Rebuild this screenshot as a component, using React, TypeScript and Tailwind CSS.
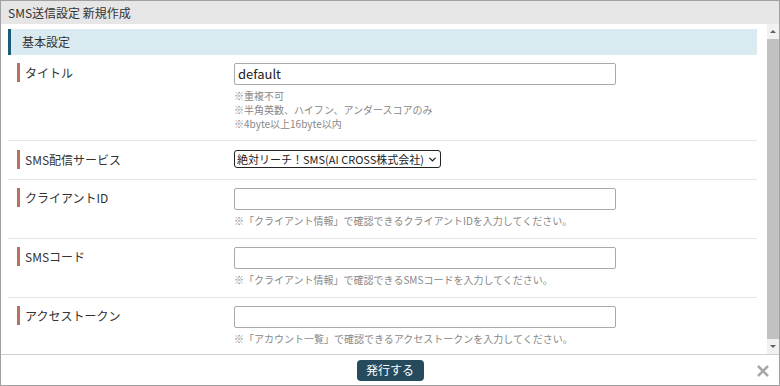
import { ChevronDown } from "lucide-react";

const FONT = { fontFamily: '"Noto Sans CJK JP", "Noto Sans", sans-serif' };

function Label({ text }: { text: string }) {
  return (
    <div className="w-[226px] shrink-0 pl-[9px] flex items-start">
      <span className="w-[3px] h-[19px] bg-[#b5725f] shrink-0" />
      <span className="ml-[5px] text-[12px] leading-[19px] text-[#333]">{text}</span>
    </div>
  );
}

function TextInput({ value = "" }: { value?: string }) {
  return (
    <div className="w-[382px] h-[22px] border border-[#a9a9a9] rounded-[2px] px-[3px] flex items-center text-[13px] text-[#222]">
      {value}
    </div>
  );
}

function Hint({ lines }: { lines: string[] }) {
  return (
    <div className="mt-[4px] text-[10px] leading-[14px] text-[#888]">
      {lines.map((l) => (
        <p key={l}>{l}</p>
      ))}
    </div>
  );
}

const rows = [
  { label: "クライアントID", hint: "※「クライアント情報」で確認できるクライアントIDを入力してください。" },
  { label: "SMSコード", hint: "※「クライアント情報」で確認できるSMSコードを入力してください。" },
  { label: "アクセストークン", hint: "※「アカウント一覧」で確認できるアクセストークンを入力してください。" },
];

export default function App() {
  return (
    <div style={FONT} className="w-[780px] h-[386px] border border-[#a0a0a0] bg-white flex flex-col overflow-hidden">
      {/* Title bar */}
      <div className="h-[23px] shrink-0 bg-[#e6e6e6] pl-[7px] flex items-center text-[12px] text-[#333]">
        SMS送信設定 新規作成
      </div>

      {/* Body */}
      <div className="flex-1 flex min-h-0">
        <div className="flex-1 pl-[7px] pr-[10px] overflow-hidden">
          <div className="mt-[5px] h-[26px] bg-[#daeaf1] border-l-[3px] border-[#1b5d78] pl-[11px] flex items-center text-[12px] text-[#333]">
            基本設定
          </div>

          {/* タイトル */}
          <div className="flex pt-[8px] pb-[9px] border-b border-[#e6e6e6]">
            <Label text="タイトル" />
            <div>
              <TextInput value="default" />
              <Hint lines={["※重複不可", "※半角英数、ハイフン、アンダースコアのみ", "※4byte以上16byte以内"]} />
            </div>
          </div>

          {/* SMS配信サービス */}
          <div className="flex pt-[9px] pb-[10px] border-b border-[#e6e6e6]">
            <Label text="SMS配信サービス" />
            <div className="h-[18px] border border-[#222] rounded-[3px] pl-[2px] pr-[2px] flex items-center gap-[3px] text-[11px] text-[#222] leading-none">
              絶対リーチ！SMS(AI CROSS株式会社)
              <ChevronDown className="w-[11px] h-[11px]" strokeWidth={3} />
            </div>
          </div>

          {rows.map((r, i) => (
            <div key={r.label} className={`flex pt-[8px] pb-[10px] ${i < rows.length - 1 ? "border-b border-[#e6e6e6]" : ""}`}>
              <Label text={r.label} />
              <div>
                <TextInput />
                <Hint lines={[r.hint]} />
              </div>
            </div>
          ))}
        </div>

        {/* Scrollbar */}
        <div className="w-[12px] shrink-0 bg-[#f1f1f1] flex flex-col items-center">
          <div className="h-[15px] flex items-center justify-center">
            <span className="w-0 h-0 border-x-[3px] border-x-transparent border-b-[3px] border-b-[#606060]" />
          </div>
          <div className="w-full flex-1 bg-[#c1c1c1]" />
          <div className="h-[15px] flex items-center justify-center">
            <span className="w-0 h-0 border-x-[3px] border-x-transparent border-t-[3px] border-t-[#606060]" />
          </div>
        </div>
      </div>

      {/* Footer */}
      <div className="h-[31px] shrink-0 border-t border-[#cfcfcf] relative flex items-center justify-center">
        <button className="w-[67px] h-[21px] bg-[#264b5d] rounded-[4px] text-white text-[12px] flex items-center justify-center">
          発行する
        </button>
        <svg className="absolute right-[10px] top-[10px] w-[12px] h-[12px]" viewBox="0 0 12 12">
          <path d="M1 1L11 11M11 1L1 11" stroke="#a8a8a8" strokeWidth={2.6} />
        </svg>
      </div>
    </div>
  );
}
